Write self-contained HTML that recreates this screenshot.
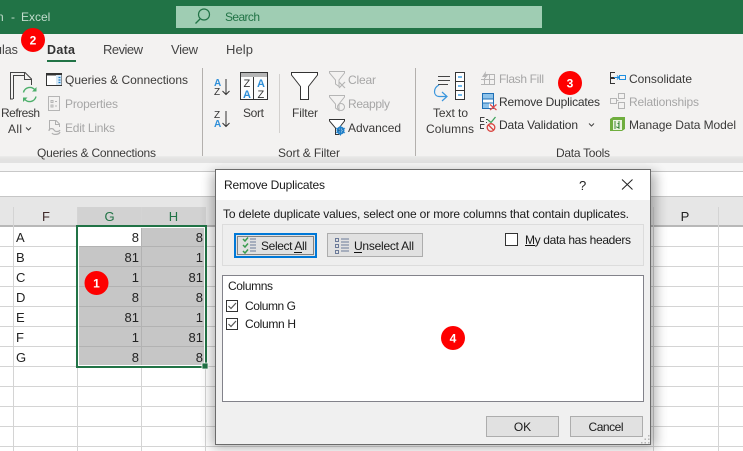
<!DOCTYPE html>
<html><head><meta charset="utf-8"><title>Remove Duplicates</title>
<style>
html,body{margin:0;padding:0;background:#fff;width:743px;height:451px;overflow:hidden}
svg{display:block}
text{font-family:"Liberation Sans",sans-serif;font-size:12px;fill:#3b3a39}
.g{fill:#a6a6a6}
.d{fill:#1a1a1a}
.c{font-size:13px;fill:#222}
.t{font-size:13px;fill:#444}
.b{font-weight:bold;fill:#fff;font-size:12px}
</style></head><body>
<svg width="743" height="451" viewBox="0 0 743 451" xmlns="http://www.w3.org/2000/svg">
<defs>
<filter id="sh" x="-10%" y="-10%" width="120%" height="120%"><feGaussianBlur stdDeviation="6"/></filter>
<filter id="sh2" x="-5%" y="-50%" width="110%" height="200%"><feGaussianBlur stdDeviation="3"/></filter>
</defs>

<!-- title bar -->
<rect width="743" height="34" fill="#217346"/>
<rect x="176" y="6" width="366" height="22" fill="#9fcdb3"/>
<text x="-3" y="21" style="fill:#c3dccd">n</text>
<text x="11" y="21" style="fill:#c3dccd">-</text>
<text x="21" y="21" style="fill:#c3dccd">Excel</text>
<circle cx="204" cy="14.500" r="5.500" fill="none" stroke="#217346" stroke-width="1.200"/>
<path d="M200 19L195.500 23.500" stroke="#217346" stroke-width="1.300"/>
<text x="225" y="21" textLength="35" style="fill:#217346">Search</text>

<!-- ribbon -->
<rect x="0" y="34" width="743" height="126" fill="#f3f2f1"/>
<text x="-5" y="54" class="t" style="font-size:12.500px">ulas</text>
<text x="47" y="54" class="t" textLength="28" style="fill:#333;font-weight:bold;font-size:12.500px">Data</text>
<rect x="47" y="60" width="29" height="2" fill="#217346"/>
<text x="103" y="54" class="t" textLength="40">Review</text>
<text x="171" y="54" class="t" textLength="27">View</text>
<text x="226" y="54" class="t" textLength="27">Help</text>

<!-- separators -->
<rect x="202" y="68" width="1" height="88" fill="#b3b0ad"/>
<rect x="279" y="74" width="1" height="59" fill="#d2d0ce"/>
<rect x="415" y="68" width="1" height="88" fill="#b3b0ad"/>

<!-- refresh icon -->
<path d="M13 99H10.500V72.500H25L31.500 79V85M24.500 73V79.500H31.500M13.500 99V75.500H24" fill="none" stroke="#444" stroke-width="1"/>
<path d="M23.500 92.500A6.500 6.500 0 0 1 35 90M36 96.500A6.500 6.500 0 0 1 24.500 99" fill="none" stroke="#4caf6a" stroke-width="1.400"/>
<path d="M36.500 87V91.500H32ZM23 102V97.500H27.500Z" fill="#4caf6a"/>
<text x="1" y="117" textLength="39">Refresh</text>
<text x="8" y="133" textLength="14">All</text>
<path d="M26 127.500L28.500 130L31 127.500" fill="none" stroke="#444" stroke-width="1"/>

<!-- queries -->
<rect x="46.500" y="73.500" width="15" height="12" fill="#fff" stroke="#333"/>
<rect x="46.500" y="73.500" width="15" height="2" fill="#333"/>
<rect x="56" y="75" width="5.500" height="10" fill="#d7e9f7"/>
<path d="M58.500 77.500H60.500M58.500 80H60.500M58.500 82.500H60.500" stroke="#1f7fc8" stroke-width="1.200"/>
<text x="65" y="84" textLength="123">Queries &amp; Connections</text>

<!-- properties -->
<rect x="48.500" y="96.500" width="11" height="14" fill="none" stroke="#b5b5b5"/>
<path d="M51 100.500H53V102.500H51ZM51 105H53V107H51ZM55 101.500H57M55 106H57" fill="none" stroke="#b5b5b5"/>
<text x="65" y="108" textLength="53" class="g">Properties</text>

<!-- edit links -->
<path d="M49.500 130V120.500H56L59.500 124V127M55.500 121V124.500H59.500" fill="none" stroke="#b0b0b0"/>
<path d="M49 131C49 128 53 128 54 130C55 132 59 132 60 130M52 133C53 135 59 135 60 132" fill="none" stroke="#b0b0b0" stroke-width="1.200"/>
<text x="65" y="132" textLength="50" class="g">Edit Links</text>

<text x="37" y="157" textLength="119">Queries &amp; Connections</text>

<!-- sort AZ -->
<text x="214" y="86" textLength="8" style="font-size:10px;font-weight:bold;fill:#2f8fd8">A</text>
<text x="214" y="95" textLength="8" style="font-size:10px;fill:#333">Z</text>
<path d="M226 79V94.500M222.500 91L226 94.500L229.500 91" fill="none" stroke="#333" stroke-width="1"/>
<text x="214" y="118" textLength="8" style="font-size:10px;fill:#333">Z</text>
<text x="214" y="127" textLength="8" style="font-size:10px;font-weight:bold;fill:#2f8fd8">A</text>
<path d="M226 111V126.500M222.500 123L226 126.500L229.500 123" fill="none" stroke="#333" stroke-width="1"/>

<!-- sort big -->
<rect x="240.500" y="72.500" width="27" height="27" fill="#fdfdfd" stroke="#333"/>
<rect x="241" y="73" width="26" height="4" fill="#b5b5b5"/>
<path d="M253.500 77V99.500" stroke="#333"/>
<text x="243.500" y="87" style="font-size:11px;fill:#333">Z</text>
<text x="243" y="98" style="font-size:11px;font-weight:bold;fill:#2f8fd8">A</text>
<text x="257" y="87" style="font-size:11px;font-weight:bold;fill:#2f8fd8">A</text>
<text x="257.500" y="98" style="font-size:11px;fill:#333">Z</text>
<text x="243" y="117" textLength="21">Sort</text>

<!-- filter -->
<path d="M291.500 72.500H317.500V75L308.500 86.500V99.500H300.500V86.500L291.500 75Z" fill="#fff" stroke="#333"/>
<text x="292" y="117" textLength="26">Filter</text>

<!-- clear -->
<path d="M329.500 71.500H344.500V73L339 80V86.500L335.500 84V80L329.500 73Z" fill="none" stroke="#b5b5b5"/>
<path d="M339 82L345 88M345 82L339 88" stroke="#b5b5b5" stroke-width="1.200"/>
<text x="348" y="84" textLength="28" class="g">Clear</text>
<path d="M329.500 95.500H344.500V97L339 104V110.500L335.500 108V104L329.500 97Z" fill="none" stroke="#b5b5b5"/>
<circle cx="341" cy="107" r="3.500" fill="none" stroke="#b5b5b5"/>
<text x="348" y="108" textLength="42" class="g">Reapply</text>
<path d="M329.500 119.500H344.500V121L339 128V134.500H335.500V128L329.500 121Z" fill="#fff" stroke="#333"/>
<circle cx="340.500" cy="130.500" r="3" fill="none" stroke="#1f7fc8" stroke-width="2"/>
<path d="M340.500 125.500V135.500M336 128L345 133M345 128L336 133" stroke="#1f7fc8" stroke-width="1"/>
<text x="348" y="132" textLength="53">Advanced</text>
<text x="278" y="157" textLength="62">Sort &amp; Filter</text>

<!-- text to columns -->
<path d="M438 76.500H450M438 80.500H450M438 84.500H448" stroke="#444"/>
<rect x="455.500" y="72.500" width="9" height="27" fill="#fff" stroke="#333"/>
<path d="M455.500 81.500H464.500M455.500 90.500H464.500" stroke="#333"/>
<path d="M458 77H462M458 86H462M458 95H462" stroke="#1f8fe0" stroke-width="1.200"/>
<path d="M439 85C433 88 433 96 439 96.500H447M442 92L447 96.500L442 101" fill="none" stroke="#3a96dd" stroke-width="1.200"/>
<text x="433" y="117" textLength="35">Text to</text>
<text x="426" y="133" textLength="48">Columns</text>

<!-- flash fill -->
<path d="M481 84.500H494.500V74.500H484M484.500 84.500V78M489.500 84.500V74.500M481 79.500H494.500" fill="none" stroke="#b5b5b5"/>
<path d="M486 71L482 77H485L483 81L488 75H485.500Z" fill="#b5b5b5"/>
<text x="499" y="83" textLength="45" class="g">Flash Fill</text>

<!-- remove duplicates -->
<rect x="482.500" y="93.500" width="11" height="15" fill="#fff" stroke="#1f6fb5"/>
<rect x="483" y="94" width="10" height="4.500" fill="#8ec3ea"/>
<rect x="483" y="103" width="6" height="5" fill="#8ec3ea"/>
<path d="M482.500 99H493.500M482.500 103H493.500" stroke="#1f6fb5"/>
<path d="M490 104.500L496.500 110M496.500 104.500L490 110" stroke="#e04b4b" stroke-width="1.300"/>
<text x="499" y="106" textLength="101" style="fill:#333">Remove Duplicates</text>

<!-- data validation -->
<path d="M484.500 117.500H480.500V121.500H484M484.500 124.500H480.500V128.500H484M486 119.500H488M486 122.500H487" fill="none" stroke="#444"/>
<path d="M488 120L491 122.500L495.500 117" fill="none" stroke="#3fa35c" stroke-width="1.300"/>
<circle cx="491" cy="127.500" r="3.800" fill="none" stroke="#d9443f" stroke-width="1.300"/>
<path d="M488.500 125L493.500 130" stroke="#d9443f" stroke-width="1.300"/>
<text x="499" y="129" textLength="79" style="fill:#333">Data Validation</text>
<path d="M589 123.500L591.500 126L594 123.500" fill="none" stroke="#444"/>

<!-- consolidate -->
<path d="M615 72.500H610.500V77.500H614M615 78.500H610.500V83.500H615" fill="none" stroke="#333"/>
<path d="M614 77.500H619M617 75.500L619 77.500L617 79.500" fill="none" stroke="#1f8fe0"/>
<rect x="619.500" y="75.500" width="6" height="4" fill="none" stroke="#1f8fe0"/>
<text x="629" y="83" textLength="63">Consolidate</text>

<!-- relationships -->
<rect x="610.500" y="98.500" width="6" height="5" fill="none" stroke="#b5b5b5"/>
<rect x="618.500" y="93.500" width="6" height="5" fill="none" stroke="#b5b5b5"/>
<rect x="618.500" y="102.500" width="6" height="6" fill="none" stroke="#b5b5b5"/>
<path d="M616.500 100.500H618.500" stroke="#b5b5b5"/>
<text x="629" y="106" textLength="70" class="g">Relationships</text>

<!-- manage data model -->
<path d="M610 119L613 117H625V129L622 131H610Z" fill="#6fae3e"/>
<rect x="613" y="120" width="9" height="10" fill="#e9f3df"/>
<path d="M615 121V129M619 121V129" stroke="#3f8a2b"/>
<text x="616" y="128" style="font-size:7px;font-weight:bold;fill:#2e7d32">J</text>
<text x="629" y="129" textLength="107">Manage Data Model</text>
<text x="556" y="157" textLength="54">Data Tools</text>

<!-- ribbon shadow -->
<rect x="-10" y="158" width="763" height="4" fill="#999" opacity=".35" filter="url(#sh2)"/>
<rect x="0" y="160" width="743" height="11" fill="#f6f6f6"/>
<rect x="0" y="160" width="743" height="3" fill="#e2e2e2"/>
<rect x="0" y="171" width="743" height="1" fill="#c8c8c8"/>
<rect x="0" y="172" width="743" height="25" fill="#fff"/>
<rect x="0" y="196" width="743" height="1" fill="#c6c6c6"/>

<!-- sheet header -->
<rect x="0" y="197" width="743" height="29" fill="#e6e6e6"/>
<rect x="77" y="207" width="129" height="19" fill="#d2d2d2"/>
<rect x="0" y="225" width="743" height="2" fill="#b8b8b8"/>
<path d="M13.500 207V451M77.500 207V451M141.500 207V451M205.500 207V451M653.500 207V451M718.500 207V451" stroke="#d4d4d4"/>
<path d="M0 246.500H743M0 266.500H743M0 286.500H743M0 306.500H743M0 326.500H743M0 346.500H743M0 366.500H743M0 386.500H743M0 406.500H743M0 426.500H743M0 446.500H743" stroke="#d4d4d4"/>
<text x="46" y="221" text-anchor="middle" class="c" style="fill:#3f2a2a">F</text>
<text x="109.500" y="221" text-anchor="middle" class="c" style="fill:#217346">G</text>
<text x="173.500" y="221" text-anchor="middle" class="c" style="fill:#217346">H</text>
<text x="685" y="221" text-anchor="middle" class="c">P</text>

<!-- selection -->
<rect x="78" y="227" width="127" height="139" fill="#c6c6c6"/>
<rect x="79" y="228" width="62" height="18" fill="#fff"/>
<path d="M78 246.500H205M78 266.500H205M78 286.500H205M78 306.500H205M78 326.500H205M78 346.500H205M141.500 228V365" stroke="#b2b2b2"/>
<rect x="77.500" y="226.500" width="128" height="140" fill="none" stroke="#fff" stroke-width="3"/>
<rect x="77" y="226" width="129" height="141" fill="none" stroke="#217346" stroke-width="2"/>
<rect x="202" y="363" width="6" height="6" fill="#217346" stroke="#fff" stroke-width=".8"/>

<!-- cell text -->
<g class="cells">
<text x="16" y="242" class="c">A</text><text x="16" y="262" class="c">B</text><text x="16" y="282" class="c">C</text><text x="16" y="302" class="c">D</text><text x="16" y="322" class="c">E</text><text x="16" y="342" class="c">F</text><text x="16" y="362" class="c">G</text>
<text x="139" y="242" text-anchor="end" class="c">8</text><text x="203" y="242" text-anchor="end" class="c">8</text>
<text x="139" y="262" text-anchor="end" class="c">81</text><text x="203" y="262" text-anchor="end" class="c">1</text>
<text x="139" y="282" text-anchor="end" class="c">1</text><text x="203" y="282" text-anchor="end" class="c">81</text>
<text x="139" y="302" text-anchor="end" class="c">8</text><text x="203" y="302" text-anchor="end" class="c">8</text>
<text x="139" y="322" text-anchor="end" class="c">81</text><text x="203" y="322" text-anchor="end" class="c">1</text>
<text x="139" y="342" text-anchor="end" class="c">1</text><text x="203" y="342" text-anchor="end" class="c">81</text>
<text x="139" y="362" text-anchor="end" class="c">8</text><text x="203" y="362" text-anchor="end" class="c">8</text>
</g>

<!-- dialog -->
<rect x="212" y="172" width="444" height="276" fill="#000" opacity=".3" filter="url(#sh)"/>
<rect x="215.500" y="169.500" width="435" height="275" fill="#f0f0f0" stroke="#6b6b6b"/>
<rect x="216" y="170" width="434" height="30" fill="#fff"/>
<text x="224" y="189" textLength="101" class="d">Remove Duplicates</text>
<text x="579" y="190" style="font-size:13px;fill:#222">?</text>
<path d="M622 179.500L632.500 189.500M632.500 179.500L622 189.500" stroke="#222" stroke-width="1"/>
<text x="223" y="218" textLength="406" class="d">To delete duplicate values, select one or more columns that contain duplicates.</text>

<!-- option group -->
<rect x="222.500" y="224.500" width="421" height="41" fill="#eeeeee" stroke="#dcdcdc"/>
<rect x="235" y="234" width="81" height="23" fill="#e1e1e1" stroke="#0078d7" stroke-width="2"/>
<rect x="237.500" y="236.500" width="76" height="18" fill="none" stroke="#222" stroke-dasharray="1 1"/>
<path d="M243 239L245 241L248 237.500M243 245L245 247L248 243.500M243 251L245 253L248 249.500" fill="none" stroke="#3a9c50" stroke-width="1.500"/>
<path d="M250 239H256M250 242H256M250 245H256M250 248H256M250 251H256" stroke="#6b7a99"/>
<text x="261" y="250" textLength="46" class="d">Select All</text>
<path d="M294 252.500H302" stroke="#111"/>
<rect x="327.500" y="233.500" width="95" height="23" fill="#e1e1e1" stroke="#adadad"/>
<path d="M335.500 238.500H338.500V241.500H335.500ZM335.500 244.500H338.500V247.500H335.500ZM335.500 250.500H338.500V253.500H335.500Z" fill="none" stroke="#6b7a99"/>
<path d="M341 239H349M341 242H349M341 245H349M341 248H349M341 251H349" stroke="#6b7a99"/>
<text x="354" y="250" textLength="60" class="d">Unselect All</text>
<path d="M354 252.500H362" stroke="#111"/>
<rect x="505.500" y="233.500" width="12" height="12" fill="#fff" stroke="#333"/>
<text x="525" y="244" textLength="106" class="d">My data has headers</text>
<path d="M525 245.500H535" stroke="#111"/>

<!-- list -->
<rect x="222.500" y="275.500" width="421" height="126" fill="#fff" stroke="#82828a"/>
<text x="228" y="290" textLength="45" class="d">Columns</text>
<rect x="226.500" y="300.500" width="11" height="11" fill="#fff" stroke="#333"/>
<path d="M228.500 306L231 308.500L236 303" fill="none" stroke="#555" stroke-width="1.200"/>
<text x="245" y="310" textLength="51" class="d">Column G</text>
<rect x="226.500" y="318.500" width="11" height="11" fill="#fff" stroke="#333"/>
<path d="M228.500 324L231 326.500L236 321" fill="none" stroke="#555" stroke-width="1.200"/>
<text x="245" y="328" textLength="51" class="d">Column H</text>

<!-- buttons -->
<rect x="486.500" y="416.500" width="72" height="20" fill="#e1e1e1" stroke="#adadad"/>
<text x="522.500" y="431" text-anchor="middle" class="d">OK</text>
<rect x="570.500" y="416.500" width="72" height="20" fill="#e1e1e1" stroke="#adadad"/>
<text x="588.500" y="431" textLength="35" class="d">Cancel</text>
<path d="M648 435h1.500v1.500H648ZM648 438.500h1.500V440H648ZM644.500 438.500H646V440H644.500ZM648 442h1.500v1.500H648ZM644.500 442H646v1.500H644.500ZM641 442h1.500v1.500H641Z" fill="#b5b5b5"/>

<!-- badges -->
<circle cx="33" cy="40" r="12" fill="#fe0000"/><text x="33" y="44.500" text-anchor="middle" class="b">2</text>
<circle cx="570" cy="83" r="12" fill="#fe0000"/><text x="570" y="87.500" text-anchor="middle" class="b">3</text>
<circle cx="96.500" cy="283" r="12" fill="#fe0000"/><text x="96.500" y="287.500" text-anchor="middle" class="b">1</text>
<circle cx="453" cy="338" r="12" fill="#fe0000"/><text x="453" y="342.500" text-anchor="middle" class="b">4</text>
</svg>
</body></html>
